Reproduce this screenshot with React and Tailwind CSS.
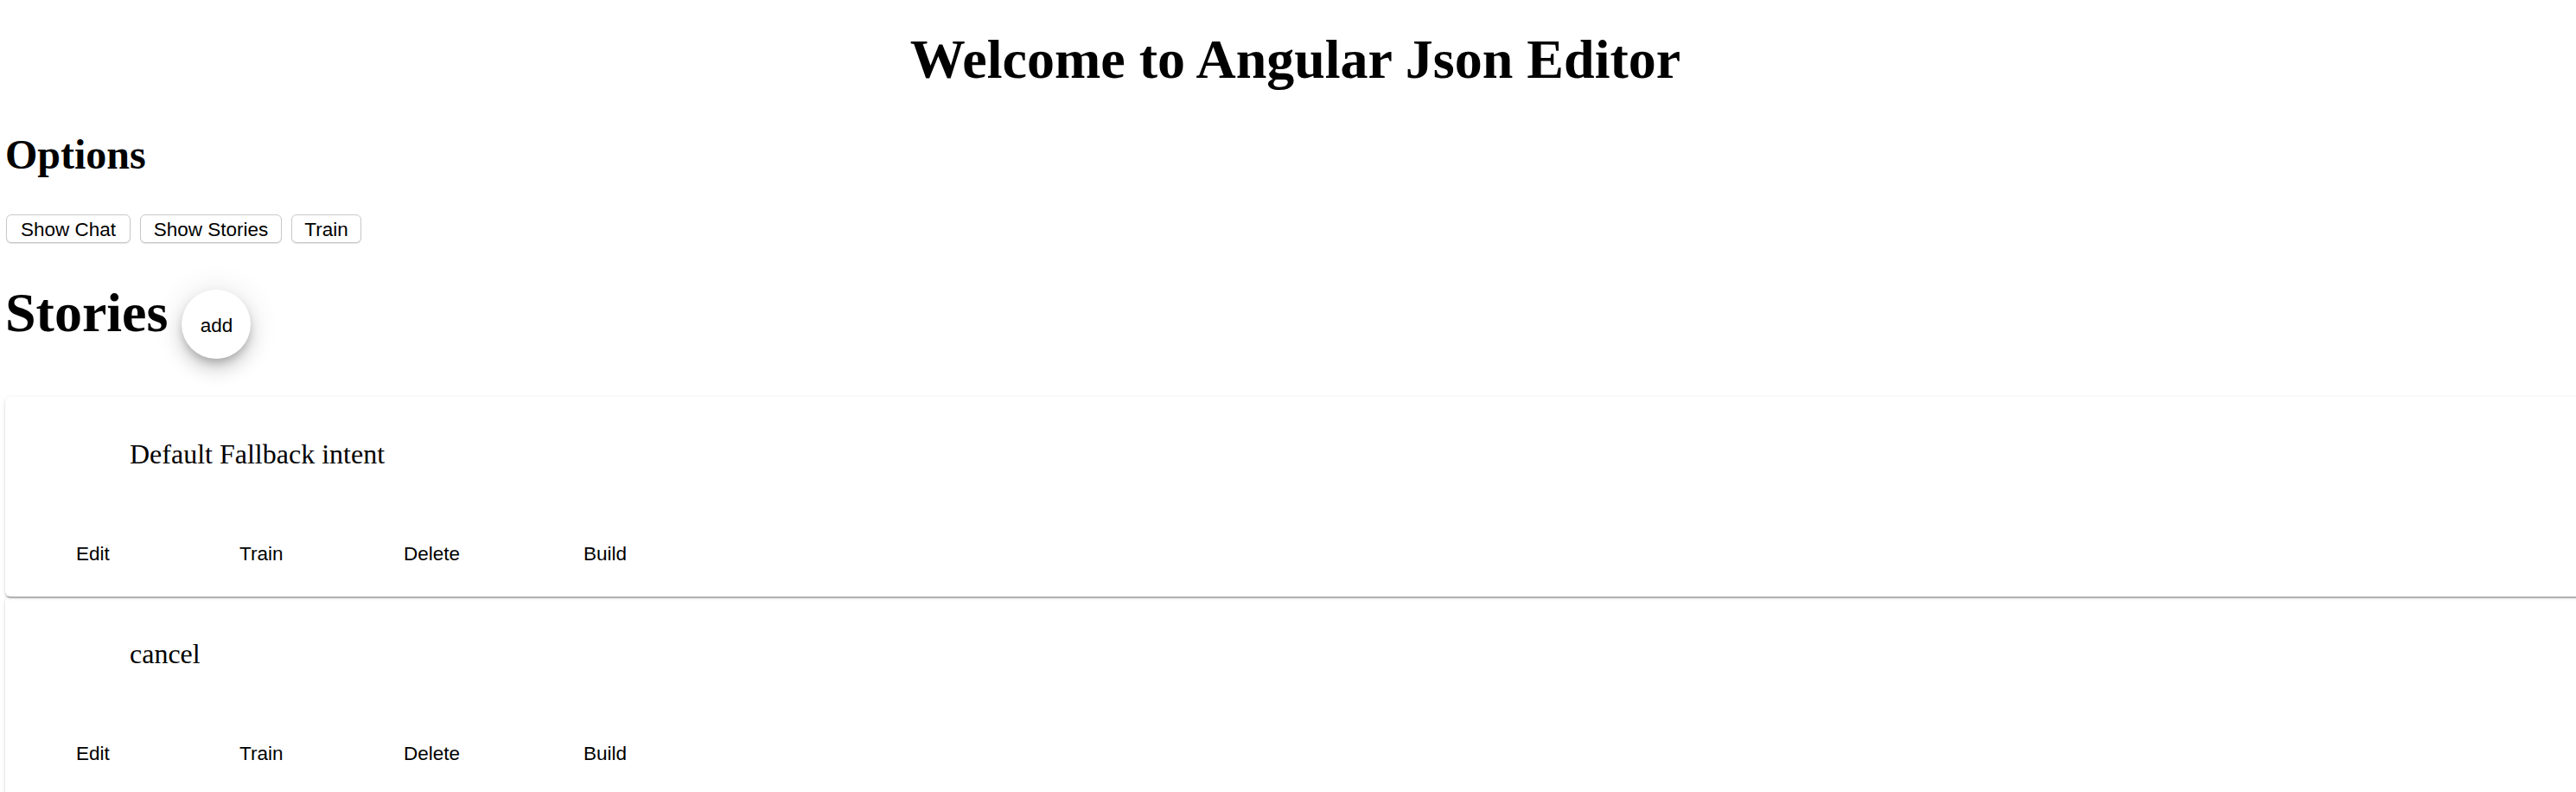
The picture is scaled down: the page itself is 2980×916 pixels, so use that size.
export default function App() {
  const cards = [
    { title: "Default Fallback intent", z: "z-[2]" },
    { title: "cancel", z: "z-[1]" },
  ];
  return (
    <div className="h-[916px] w-full overflow-hidden bg-white pl-[6px] text-black">
      <h1 className="mt-[32px] pl-[11px] text-center font-['Liberation_Serif',serif] text-[64px] font-bold leading-[74px]">
        Welcome to Angular Json Editor
      </h1>
      <h2 className="mt-[45px] font-['Liberation_Serif',serif] text-[48px] font-bold leading-[55px]">
        Options
      </h2>
      <div className="mt-[42px] flex gap-[11px] pl-px font-['Liberation_Sans',sans-serif] text-[22.5px]">
        <button className="h-[33px] w-[144px] rounded-[6px] border border-[#c9c9c9] bg-white pt-[3px] text-center leading-none shadow-[0_1px_1px_rgba(0,0,0,0.12)]">
          Show Chat
        </button>
        <button className="h-[33px] w-[164px] rounded-[6px] border border-[#c9c9c9] bg-white pt-[3px] text-center leading-none shadow-[0_1px_1px_rgba(0,0,0,0.12)]">
          Show Stories
        </button>
        <button className="h-[33px] w-[81px] rounded-[6px] border border-[#c9c9c9] bg-white pt-[3px] text-center leading-none shadow-[0_1px_1px_rgba(0,0,0,0.12)]">
          Train
        </button>
      </div>
      <div className="mt-[44px] flex items-start">
        <h1 className="font-['Liberation_Serif',serif] text-[64px] font-bold leading-[74px]">Stories</h1>
        <button className="ml-[16px] mt-[10px] flex h-[80px] w-[80px] items-center justify-center rounded-full bg-white pt-[5px] font-['Liberation_Sans',sans-serif] text-[22.5px] leading-none shadow-[0_6px_10px_-2px_rgba(0,0,0,0.2),0_12px_20px_0_rgba(0,0,0,0.14),0_2px_36px_0_rgba(0,0,0,0.12)]">
          add
        </button>
      </div>
      <div className="mt-[44px] flex flex-col">
        {cards.map((c) => (
          <div
            key={c.title}
            className={`relative ${c.z} w-[3000px] rounded-[6px] bg-white pb-[34px] pt-[48px] shadow-[0_3px_2px_-2px_rgba(0,0,0,0.35),0_2px_2px_0_rgba(0,0,0,0.14),0_1px_5px_0_rgba(0,0,0,0.1)]`}
          >
            <div className="pl-[144px] font-['Liberation_Serif',serif] text-[32px] leading-[37px]">{c.title}</div>
            <div className="mt-[82px] flex pl-[82px] font-['Liberation_Sans',sans-serif] text-[22.5px] leading-[30px]">
              <span className="w-[189px]">Edit</span>
              <span className="w-[190px]">Train</span>
              <span className="w-[208px]">Delete</span>
              <span>Build</span>
            </div>
          </div>
        ))}
      </div>
    </div>
  );
}
